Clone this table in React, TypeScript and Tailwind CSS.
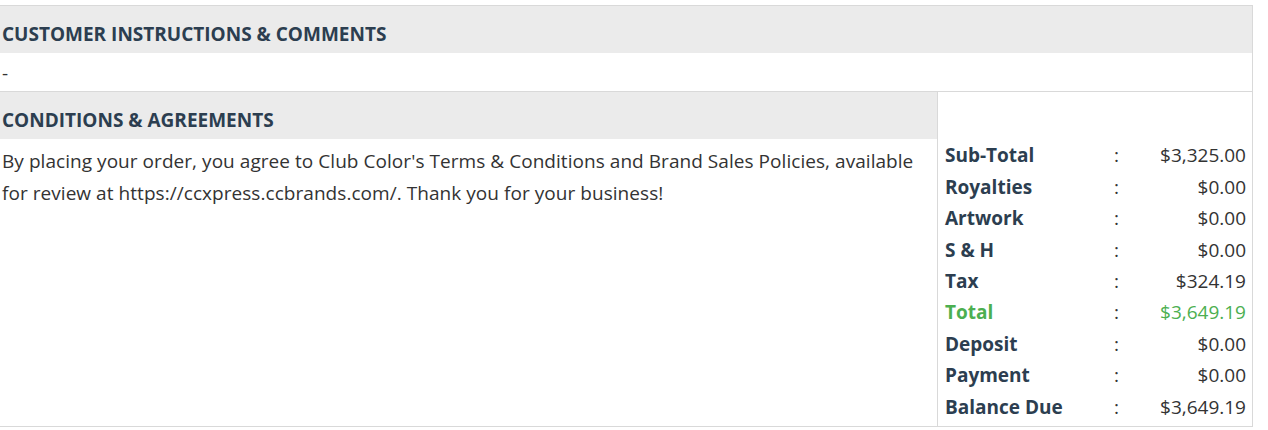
import React from 'react';

const totals = [
  { label: 'Sub-Total', value: '$3,325.00' },
  { label: 'Royalties', value: '$0.00' },
  { label: 'Artwork', value: '$0.00' },
  { label: 'S & H', value: '$0.00' },
  { label: 'Tax', value: '$324.19' },
  { label: 'Total', value: '$3,649.19', green: true },
  { label: 'Deposit', value: '$0.00' },
  { label: 'Payment', value: '$0.00' },
  { label: 'Balance Due', value: '$3,649.19' },
];

const App = () => {
  return (
    <div className="bg-white pt-[5px] font-['Open_Sans',sans-serif] text-[19px] text-[#333]">
      {/* ---------------------- Main box ---------------------- */}
      <div className="w-[1253px] border-t border-r border-b border-[#d9d9d9]">
        {/* ---------------- customer instructions ---------------- */}
        <div className="h-[47px] bg-[#ebebeb] px-[2px] pt-[15px] font-bold text-[#2c3e50] leading-[26px]">
          CUSTOMER INSTRUCTIONS &amp; COMMENTS
        </div>
        <div className="h-[38px] px-[2px] pt-[7px] leading-[26px]">-</div>
        {/* ---------------- conditions + totals ---------------- */}
        <div className="flex border-t border-[#d9d9d9]">
          <div className="w-[937px]">
            <div className="h-[47px] bg-[#ebebeb] px-[2px] pt-[15px] font-bold text-[#2c3e50] leading-[26px]">
              CONDITIONS &amp; AGREEMENTS
            </div>
            <p className="pl-[2px] pr-[20px] pt-[6px] leading-[32px] tracking-[0.05px]">
              By placing your order, you agree to Club Color's Terms &amp; Conditions and Brand Sales Policies, available
              for review at https://ccxpress.ccbrands.com/. Thank you for your business!
            </p>
          </div>
          {/* ---------------- totals ---------------- */}
          <div className="flex-1 border-l border-[#d9d9d9] pt-[48px] pb-[3px] pl-[7px] pr-[6px]">
            {totals.map((t) => (
              <div key={t.label} className="flex h-[31.4px] items-center">
                <span className={`w-[169px] font-bold ${t.green ? 'text-[#4caf50]' : 'text-[#2c3e50]'}`}>
                  {t.label}
                </span>
                <span className="w-[20px] text-[#333]">:</span>
                <span className={`flex-1 text-right ${t.green ? 'text-[#4caf50]' : 'text-[#333]'}`}>{t.value}</span>
              </div>
            ))}
          </div>
        </div>
      </div>
    </div>
  );
};

export default App;
